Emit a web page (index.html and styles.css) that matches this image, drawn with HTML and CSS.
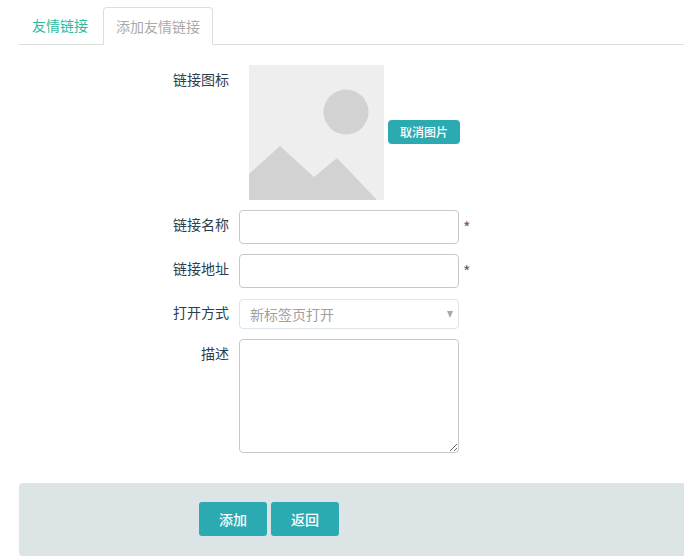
FILE: index.html
```html
<!DOCTYPE html>
<html lang="zh-CN">
<head>
<meta charset="utf-8">
<title>添加友情链接</title>
<link rel="stylesheet" href="styles.css">
</head>
<body>
<div class="page">
  <nav class="tabs">
    <a class="tab">友情链接</a>
    <a class="tab tab-active">添加友情链接</a>
  </nav>
  <form class="form">
    <div class="row row-image">
      <label class="label">链接图标</label>
      <div class="control image-control">
        <svg class="thumb" viewBox="0 0 135 135" width="135" height="135" aria-hidden="true">
          <rect width="135" height="135" fill="#eeeeee"/>
          <circle cx="97" cy="47" r="22.5" fill="#d2d2d2"/>
          <polygon points="0,109 31,81 65,112 88,93 128,135 0,135" fill="#d2d2d2"/>
        </svg>
        <button type="button" class="btn btn-small">取消图片</button>
      </div>
    </div>
    <div class="row">
      <label class="label">链接名称</label>
      <div class="control"><input class="field" type="text"><span class="req">*</span></div>
    </div>
    <div class="row">
      <label class="label">链接地址</label>
      <div class="control"><input class="field" type="text"><span class="req">*</span></div>
    </div>
    <div class="row row-select">
      <label class="label">打开方式</label>
      <div class="control">
        <div class="select"><span>新标签页打开</span><i class="caret"></i></div>
      </div>
    </div>
    <div class="row">
      <label class="label">描述</label>
      <div class="control"><textarea class="area"></textarea></div>
    </div>
    <div class="actions">
      <button type="button" class="btn btn-large">添加</button>
      <button type="button" class="btn btn-large">返回</button>
    </div>
  </form>
</div>
</body>
</html>
```
FILE: styles.css
```css
* { box-sizing: border-box; }
html, body { margin: 0; padding: 0; background: #fff; height: 100%; }
body {
  font-family: "Noto Sans CJK SC", "Liberation Sans", sans-serif;
  font-size: 14px;
  color: #2c3e50;
}
.page { padding-top: 7px; padding-left: 19px; }
.tabs {
  display: flex;
  height: 38px;
  border-bottom: 1px solid #ddd;
}
.tab {
  height: 38px;
  line-height: 37px;
  padding: 0 13px;
  color: #2dbba0;
  margin-right: 2px;
}
.tab-active {
  width: 110px;
  padding: 0 12px;
  color: #aaa;
  background: #fff;
  border: 1px solid #ddd;
  border-bottom-color: #fff;
  border-radius: 4px 4px 0 0;
}
.form { margin-top: 20px; }
.row { display: flex; margin-bottom: 10px; }
.label {
  width: 220px;
  padding-right: 10px;
  text-align: right;
  line-height: 20px;
  padding-top: 4px;
  flex: none;
}
.control { display: flex; align-items: flex-start; }
.image-control { padding-left: 10px; align-items: center; }
.thumb { display: block; flex: none; }
.btn {
  font-family: inherit;
  font-weight: 500;
  border: 0;
  color: #fff;
  background: #2baab1;
  padding: 0;
  cursor: pointer;
}
.btn-small {
  width: 72px; height: 24px;
  margin-left: 4px;
  margin-top: -2px;
  font-size: 12px;
  border-radius: 4px;
  line-height: 24px;
}
.btn-large {
  width: 68px; height: 34px;
  font-size: 14px;
  border-radius: 3px;
  line-height: 34px;
}
.field {
  width: 220px; height: 34px;
  border: 1px solid #c8c8c8;
  border-radius: 4px;
  background: #fff;
  display: block;
}
.req { color: #6c5a6e; margin-left: 4px; line-height: 34px; font-size: 16px; }
.row-select { margin-top: 11px; }
.row-select .label { padding-top: 3px; }
.select {
  width: 220px; height: 30px;
  border: 1px solid #dce4ec;
  border-radius: 4px;
  padding-left: 10px;
  line-height: 28px;
  color: #a0a0a0;
  font-size: 14px;
  position: relative;
}
.caret {
  position: absolute;
  right: 5px; top: 11px;
  width: 0; height: 0;
  border-left: 3px solid transparent;
  border-right: 3px solid transparent;
  border-top: 7px solid #a8a8a8;
}
.area {
  display: block;
  width: 220px; height: 114px;
  border: 1px solid #c8c8c8;
  border-radius: 4px;
  background: #fff;
  resize: both;
}
.actions {
  margin-top: 30px;
  height: 73px;
  background: #dce4e5;
  border-radius: 4px 0 0 4px;
  padding: 19px 0 0 180px;
  display: flex;
  gap: 4px;
}
```
